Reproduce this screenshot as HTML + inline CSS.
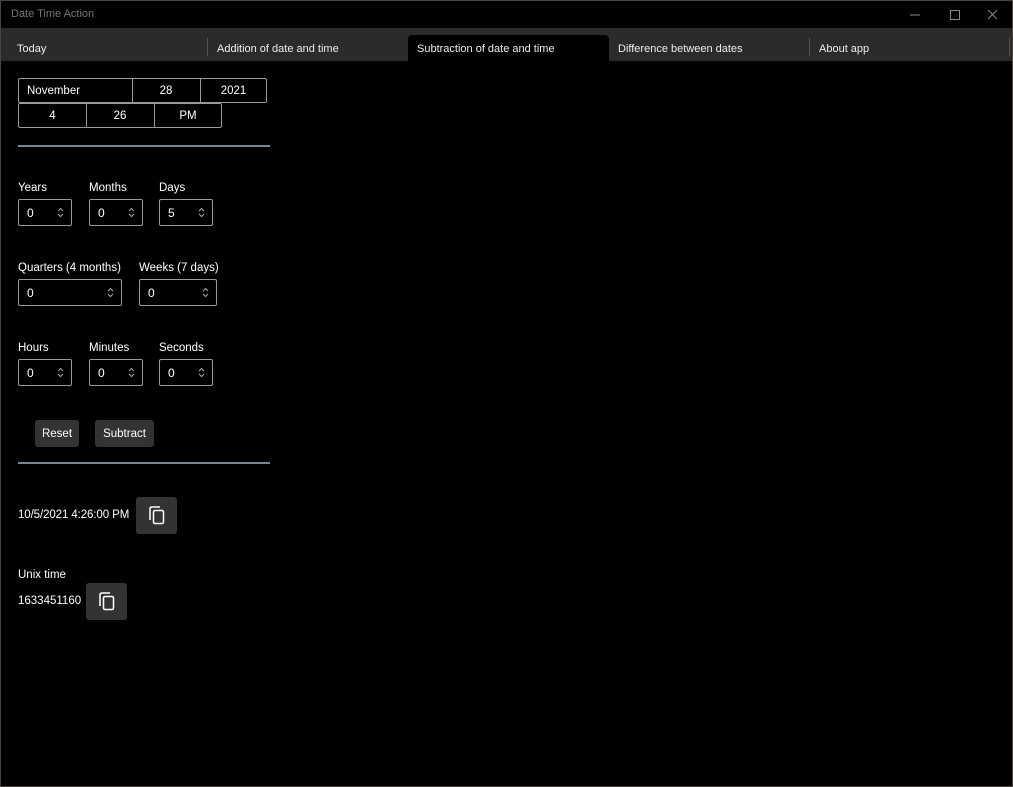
<!DOCTYPE html>
<html><head><style>
*{box-sizing:border-box;margin:0;padding:0}
body{width:1013px;height:787px;background:#000;font-family:"Liberation Sans",sans-serif;color:#fff;position:relative;overflow:hidden;font-size:11.5px}
.frame{position:absolute;inset:0;border:1px solid #4a4540;pointer-events:none;z-index:10}
.a{position:absolute}
.title{left:11px;top:8px;font-size:11px;color:#777}
.tabbar{left:1px;top:28px;width:1011px;height:33px;background:#2b2b2b}
.tab{position:absolute;top:43px;font-size:11px;color:#eee}
.sep{position:absolute;top:38px;width:1px;height:18px;background:#555}
.sel{left:408px;top:35px;width:201px;height:27px;background:#000;border-radius:4px 4px 0 0}
.box{position:absolute;border:1px solid #999;border-radius:2px}
.cell{position:absolute;top:0;height:100%;display:flex;align-items:center;justify-content:center;font-size:11.5px}
.vl{position:absolute;top:0;width:1px;height:100%;background:#999}
.lbl{position:absolute;font-size:11.5px}
.num{position:absolute;left:8px;top:6px;font-size:12px}
.spin{position:absolute;right:7px;top:7px;width:7px;height:11px}
.hr{position:absolute;left:18px;width:252px;height:2px;background:#7a8594}
.btn{position:absolute;background:#333;border-radius:3px;display:flex;align-items:center;justify-content:center;font-size:11.5px}
</style></head><body>
<div class="frame"></div>
<div class="a title">Date Time Action</div>
<svg class="a" style="left:905px;top:8px" width="95" height="14"><line x1="5" y1="7" x2="15" y2="7" stroke="#888"/><rect x="45.5" y="2.5" width="9" height="9" fill="none" stroke="#888"/><path d="M83 2L92 11M92 2L83 11" stroke="#888"/></svg>
<div class="a tabbar"></div>
<div class="a sel"></div>
<div class="tab" style="left:17px">Today</div>
<div class="sep" style="left:207px"></div>
<div class="tab" style="left:217px">Addition of date and time</div>
<div class="tab" style="left:417px">Subtraction of date and time</div>
<div class="tab" style="left:618px">Difference between dates</div>
<div class="sep" style="left:809px"></div>
<div class="tab" style="left:819px">About app</div>
<div class="sep" style="left:1009px"></div>

<div class="box" style="left:18px;top:78px;width:249px;height:25px">
<div class="cell" style="left:8px;justify-content:flex-start">November</div>
<div class="vl" style="left:113px"></div><div class="cell" style="left:113px;width:68px">28</div>
<div class="vl" style="left:181px"></div><div class="cell" style="left:181px;width:67px">2021</div>
</div>
<div class="box" style="left:18px;top:103px;width:204px;height:25px">
<div class="cell" style="left:0;width:67px">4</div>
<div class="vl" style="left:67px"></div><div class="cell" style="left:67px;width:68px">26</div>
<div class="vl" style="left:135px"></div><div class="cell" style="left:135px;width:68px">PM</div>
</div>
<div class="hr" style="top:145px"></div>

<div class="lbl" style="left:18px;top:182px">Years</div>
<div class="lbl" style="left:89px;top:182px">Months</div>
<div class="lbl" style="left:159px;top:182px">Days</div>
<div class="lbl" style="left:18px;top:262px">Quarters (4 months)</div>
<div class="lbl" style="left:139px;top:262px">Weeks (7 days)</div>
<div class="lbl" style="left:18px;top:342px">Hours</div>
<div class="lbl" style="left:89px;top:342px">Minutes</div>
<div class="lbl" style="left:159px;top:342px">Seconds</div>

<div class="box" style="left:18px;top:199px;width:54px;height:27px"><span class="num">0</span><svg class="spin"><path d="M1 4L3.5 1.5L6 4M1 7L3.5 9.5L6 7" fill="none" stroke="#aaa"/></svg></div>
<div class="box" style="left:89px;top:199px;width:54px;height:27px"><span class="num">0</span><svg class="spin"><path d="M1 4L3.5 1.5L6 4M1 7L3.5 9.5L6 7" fill="none" stroke="#aaa"/></svg></div>
<div class="box" style="left:159px;top:199px;width:54px;height:27px"><span class="num">5</span><svg class="spin"><path d="M1 4L3.5 1.5L6 4M1 7L3.5 9.5L6 7" fill="none" stroke="#aaa"/></svg></div>
<div class="box" style="left:18px;top:279px;width:104px;height:27px"><span class="num">0</span><svg class="spin"><path d="M1 4L3.5 1.5L6 4M1 7L3.5 9.5L6 7" fill="none" stroke="#aaa"/></svg></div>
<div class="box" style="left:139px;top:279px;width:78px;height:27px"><span class="num">0</span><svg class="spin"><path d="M1 4L3.5 1.5L6 4M1 7L3.5 9.5L6 7" fill="none" stroke="#aaa"/></svg></div>
<div class="box" style="left:18px;top:359px;width:54px;height:27px"><span class="num">0</span><svg class="spin"><path d="M1 4L3.5 1.5L6 4M1 7L3.5 9.5L6 7" fill="none" stroke="#aaa"/></svg></div>
<div class="box" style="left:89px;top:359px;width:54px;height:27px"><span class="num">0</span><svg class="spin"><path d="M1 4L3.5 1.5L6 4M1 7L3.5 9.5L6 7" fill="none" stroke="#aaa"/></svg></div>
<div class="box" style="left:159px;top:359px;width:54px;height:27px"><span class="num">0</span><svg class="spin"><path d="M1 4L3.5 1.5L6 4M1 7L3.5 9.5L6 7" fill="none" stroke="#aaa"/></svg></div>

<div class="btn" style="left:35px;top:420px;width:44px;height:27px">Reset</div>
<div class="btn" style="left:95px;top:420px;width:59px;height:27px">Subtract</div>
<div class="hr" style="top:462px"></div>

<div class="lbl" style="left:18px;top:509px;letter-spacing:-0.1px">10/5/2021 4:26:00 PM</div>
<div class="btn" style="left:136px;top:497px;width:41px;height:37px"><svg width="18" height="20"><path d="M2 14V3Q2 1 4 1H12" fill="none" stroke="#fff" stroke-width="1.5"/><rect x="5.5" y="4.5" width="10" height="13" rx="1.5" fill="none" stroke="#fff" stroke-width="1.5"/></svg></div>
<div class="lbl" style="left:18px;top:569px">Unix time</div>
<div class="lbl" style="left:18px;top:595px">1633451160</div>
<div class="btn" style="left:86px;top:583px;width:41px;height:37px"><svg width="18" height="20"><path d="M2 14V3Q2 1 4 1H12" fill="none" stroke="#fff" stroke-width="1.5"/><rect x="5.5" y="4.5" width="10" height="13" rx="1.5" fill="none" stroke="#fff" stroke-width="1.5"/></svg></div>
</body></html>
